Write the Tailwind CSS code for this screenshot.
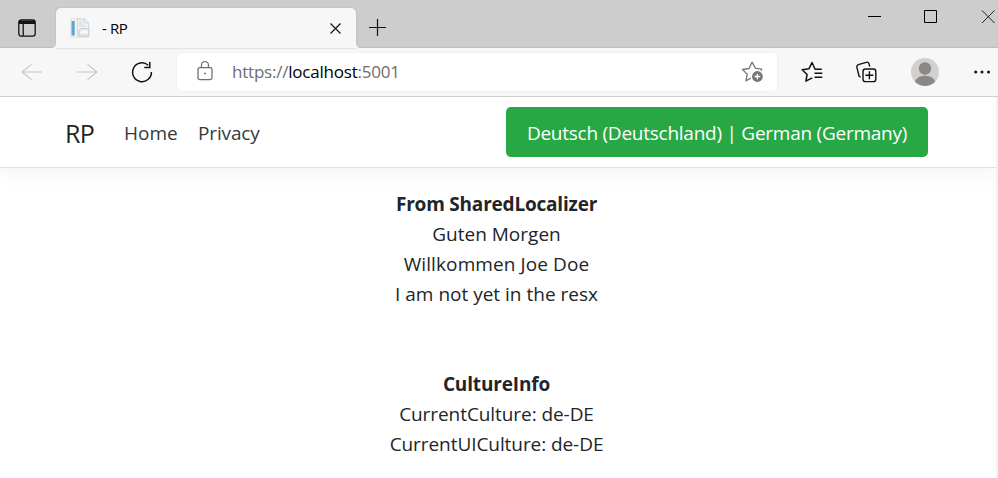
<!DOCTYPE html>
<html lang="de">
<head>
<meta charset="utf-8">
<title>- RP</title>
<script src="https://cdn.jsdelivr.net/npm/@tailwindcss/browser@4"></script>
</head>
<body class="w-[998px] h-[478px] overflow-hidden bg-white font-['Open_Sans','Noto_Sans',sans-serif] text-[#212529] flex flex-col">
<!-- Tab strip -->
<header class="h-12 shrink-0 bg-[#cdcdcd] flex shadow-[inset_0_-1px_1px_#bdbdbd]">
  <div class="w-[56px] pl-[18px] pt-[19px]">
    <svg class="w-[18px] h-[18px]" viewBox="0 0 18 18" fill="none" stroke="#111" stroke-width="1.3"><rect x=".8" y=".8" width="16.4" height="16.4" rx="2.6"/><path d="M1 3.2h16" stroke-width="3.6"/><path d="M5.2 5v12"/></svg>
  </div>
  <div class="relative mt-2 w-[300px] h-10 bg-[#f7f7f7] rounded-t-[5px] shadow-[0_0_2px_#aaa] flex items-center">
    <svg class="absolute -left-[5px] bottom-0 w-[6px] h-[5px]" viewBox="0 0 6 5" fill="#f7f7f7"><path d="M0 5Q5 5 5 0h1v5z"/></svg>
    <svg class="absolute -right-[5px] bottom-0 w-[6px] h-[5px]" viewBox="0 0 6 5" fill="#f7f7f7"><path d="M6 5Q1 5 1 0H0v5z"/></svg>
    <svg class="ml-[14px] w-5 h-5" viewBox="0 0 20 20"><path d="M.5.5h14l4 4v15H.5z" fill="#f1f0ee" stroke="#e2e3e3" stroke-width=".7"/><path d="M1.5 3h3.2v14.5H1.5z" fill="#5ba6d3"/><path d="M7.5 1h7l4 4v13h-11z" fill="#f2f3f4" stroke="#ccd3d8" stroke-width=".8"/><path d="M14 1v4h4M9 4h3M9 6h4M9 8h7" fill="none" stroke="#c5cdd3" stroke-width=".8"/><path d="M10.5 10.5h8.5v7.5h-10v-6z" fill="#e8eaec" stroke="#b9c2c9" stroke-width=".8"/><path d="M11 14h7" stroke="#fff" stroke-width="1.5"/></svg>
    <span class="ml-3 text-[15px] leading-5 tracking-[-0.4px] text-black">- RP</span>
    <svg class="ml-auto mr-[15px] w-[11px] h-[11px] mt-px" viewBox="0 0 11 11" stroke="#111" stroke-width="1.2"><path d="M.5.5l10 10M10.5.5l-10 10"/></svg>
  </div>
  <svg class="ml-[13px] mt-[19px] w-[18px] h-[18px]" viewBox="0 0 18 18" stroke="#111" stroke-width="1.2"><path d="M0 8.5h17M8.5 0v17"/></svg>
  <div class="ml-auto flex pt-[10px] gap-[42px] mr-[-2px]">
    <svg class="w-[14px] h-[13px]" viewBox="0 0 14 13" stroke="#000"><path d="M0 6.5h13"/></svg>
    <svg class="w-[14px] h-[13px]" viewBox="0 0 14 13" stroke="#000" fill="none"><path d="M.5.5h12v12H.5z"/></svg>
    <svg class="w-[20px] h-[14px]" viewBox="0 0 20 14" stroke="#222"><path d="M2 .5l12.5 12.5M14.5.5L2 13"/></svg>
  </div>
</header>
<!-- Toolbar -->
<div class="h-[49px] shrink-0 bg-[#f7f7f7] border-b border-[#cfcfcf] flex items-center">
  <svg class="ml-[21px] w-[22px] h-[18px] mt-[-1px]" viewBox="0 0 22 20" preserveAspectRatio="none" fill="none" stroke="#c8c8c8" stroke-width="1.3"><path d="M21 10H1M10.5 1.5L1 10l9.5 8.5"/></svg>
  <svg class="ml-[34px] w-[22px] h-[18px] mt-[-1px]" viewBox="0 0 22 20" preserveAspectRatio="none" fill="none" stroke="#c8c8c8" stroke-width="1.3"><path d="M0 10h20M10.5 1.5L20 10l-9.5 8.5"/></svg>
  <svg class="ml-[32px] w-[22px] h-[22px]" viewBox="0 0 22 22" fill="none" stroke="#111" stroke-width="1.5"><path d="M17.2 4.2A9.4 9.4 0 1 0 20.4 11M18.8 1v5.5h-5.5"/></svg>
  <div class="ml-[24px] w-[600px] h-[38px] mt-[-1px] bg-white rounded-[5px] shadow-[0_0_2px_#e4e4e4] flex items-center">
    <svg class="ml-5 w-4 h-5 mt-[-1px]" viewBox="0 0 16 20" fill="none" stroke="#707070" stroke-width="1.3"><rect x="1" y="6.6" width="14" height="12" rx="1.8"/><path d="M4.5 6.5V4.2a3.5 3.5 0 0 1 7 0v2.3"/><circle cx="8" cy="12.5" r=".9" fill="#707070" stroke="none"/></svg>
    <div class="ml-[19px] text-[17px] leading-6 tracking-[-0.22px] whitespace-nowrap text-[#6d6d6d]">https://<span class="text-black">localhost</span>:5001</div>
    <svg class="ml-auto mr-[13px] w-[23px] h-[22px]" viewBox="0 0 23 22" fill="none" stroke="#777" stroke-width="1.3" stroke-linejoin="round"><path d="M21 8.2l-6.4-.8L11 1.2 8 7.5l-6.5 1 4.8 4.7-1.4 6.6 5-2.6M21 8.2l-1.2 1.3"/><circle cx="16.4" cy="15.5" r="5.4" fill="#777" stroke="none"/><path d="M16.4 12.7v5.6M13.6 15.5h5.6" stroke="#fff"/></svg>
  </div>
  <svg class="ml-[24px] w-[22px] h-[22px]" viewBox="0 0 22 22" fill="none" stroke="#111" stroke-width="1.5" stroke-linejoin="round"><path d="M20.8 8.2h-6.7L11 1.5 8 7.7l-6.8 1 4.9 4.8-1.2 6.7 6.3-3.3M13.5 12.3h7.8M13.5 16.3h7.8"/></svg>
  <svg class="ml-[33px] w-[21px] h-[22px]" viewBox="0 0 21 22" fill="none" stroke="#111" stroke-width="1.4"><rect x="7" y="8" width="12.8" height="12.6" rx="2.4"/><path d="M13.4 10.3v8M9.4 14.3h8M4.5 16.3L3 15 .9 6.3Q.5 4.3 2.4 3.6l7.8-2.3q2-.6 2.7 1.3l.9 3"/></svg>
  <svg class="ml-[34px] w-[28px] h-[28px]" viewBox="0 0 28 28"><circle cx="14" cy="14" r="14" fill="#d2d0ce"/><circle cx="14" cy="10.5" r="6.2" fill="#8a8886"/><path d="M4 24C5.5 15.8 22.5 15.8 24 24Q14 32 4 24z" fill="#8a8886"/></svg>
  <svg class="ml-[34px] w-[18px] h-[4px]" viewBox="0 0 18 4" fill="#111"><circle cx="2.7" cy="2" r="1.5"/><circle cx="9" cy="2" r="1.5"/><circle cx="15.5" cy="2" r="1.5"/></svg>
</div>
<!-- Page -->
<div class="flex-1 flex border-r-2 border-[#f2f2f2] flex-col overflow-hidden">
  <nav class="h-[71px] shrink-0 border-b border-[#dee2e6] shadow-[0_5px_20px_rgba(0,0,0,0.05)] flex items-center pl-[65px] pr-[68px]">
    <a class="w-[59px] pt-px text-[25px] leading-9 tracking-[-0.6px]">RP</a>
    <a class="w-[74px] pt-px text-[19px] leading-[30px] text-[#343a40]">Home</a>
    <a class="pt-px text-[19px] leading-[30px] tracking-[-0.15px] text-[#343a40]">Privacy</a>
    <button class="ml-auto w-[422px] h-[50px] pt-px rounded-[5px] bg-[#28a745] text-white text-[19px] leading-[30px] tracking-[-0.25px] whitespace-nowrap">Deutsch (Deutschland) | German (Germany)</button>
  </nav>
  <main class="pt-[21px] pr-[3px] text-center text-[19px] leading-[30px] whitespace-nowrap">
    <p class="font-bold tracking-[-0.2px]">From SharedLocalizer</p>
    <p>Guten Morgen</p>
    <p class="tracking-[0.1px]">Willkommen Joe Doe</p>
    <p>I am not yet in the resx</p>
    <p class="font-bold mt-[60px] tracking-[-0.15px]">CultureInfo</p>
    <p class="tracking-[-0.07px]">CurrentCulture: de-DE</p>
    <p class="tracking-[-0.07px]">CurrentUICulture: de-DE</p>
  </main>
</div>
</body>
</html>
